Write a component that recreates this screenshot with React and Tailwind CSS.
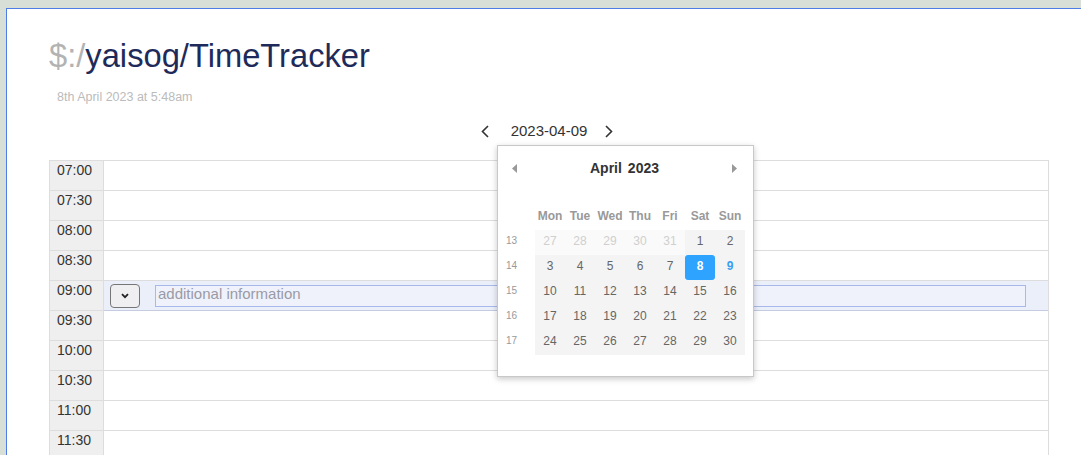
import React from "react";

const times = [];
for (let h = 7; h < 12; h++) {
  const hh = String(h).padStart(2, "0");
  times.push(hh + ":00", hh + ":30");
}

const weeks = [
  { n: 13, days: [[27, 1], [28, 1], [29, 1], [30, 1], [31, 1], [1], [2]] },
  { n: 14, days: [[3], [4], [5], [6], [7], [8, 0, "sel"], [9, 0, "today"]] },
  { n: 15, days: [[10], [11], [12], [13], [14], [15], [16]] },
  { n: 16, days: [[17], [18], [19], [20], [21], [22], [23]] },
  { n: 17, days: [[24], [25], [26], [27], [28], [29], [30]] },
];

const Chevron = ({ dir }) => (
  <svg width="8" height="13" viewBox="0 0 8 13" className="block">
    <path
      d={dir === "left" ? "M7 1 L1.5 6.5 L7 12" : "M1 1 L6.5 6.5 L1 12"}
      fill="none"
      stroke="#333"
      strokeWidth="1.6"
    />
  </svg>
);

const Calendar = () => (
  <div className="absolute left-[448px] top-[27px] w-[257px] bg-white border border-[#c8c8c8] shadow-[0_2px_6px_rgba(0,0,0,0.22)] pt-[7px] pb-[21px] z-10">
    <div className="flex items-center justify-between h-[30px] pl-[14px] pr-[16px]">
      <svg width="5" height="9" viewBox="0 0 5 9">
        <polygon points="5,0 0,4.5 5,9" fill="#999" />
      </svg>
      <div className="text-[14px] font-bold text-[#333] flex gap-[6px]">
        <span>April</span>
        <span>2023</span>
      </div>
      <svg width="5" height="9" viewBox="0 0 5 9">
        <polygon points="0,0 5,4.5 0,9" fill="#999" />
      </svg>
    </div>
    <div className="flex mt-[22px] h-[22px] items-center pl-[37px]">
      {["Mon", "Tue", "Wed", "Thu", "Fri", "Sat", "Sun"].map((d) => (
        <div key={d} className="w-[30px] text-center text-[12px] font-bold text-[#999]">
          {d}
        </div>
      ))}
    </div>
    <div className="mt-[3px]">
      {weeks.map((w) => (
        <div key={w.n} className="flex h-[25px]">
          <div className="w-[27px] mr-[10px] flex items-center justify-center pb-[5px] text-[10px] text-[#999]">
            {w.n}
          </div>
          {w.days.map(([d, out, kind]) => (
            <div
              key={d + "-" + (out ? "o" : "i")}
              className={
                "w-[30px] flex items-center justify-center pb-[4px] text-[12px] " +
                (out
                  ? "bg-[#fafafa] text-[#cfcfcf]"
                  : kind === "sel"
                  ? "bg-[#2ea3ff] text-white font-bold rounded-[3px]"
                  : kind === "today"
                  ? "bg-[#f4f4f4] text-[#3a9ff0] font-bold"
                  : "bg-[#f4f4f4] text-[#666]")
              }
            >
              {d}
            </div>
          ))}
        </div>
      ))}
    </div>
  </div>
);

export default function App() {
  return (
    <div className="h-[455px] overflow-hidden bg-[#d8dfd6] pt-[8px] pl-[6px] font-['Liberation_Sans',Arial,sans-serif]">
      <div className="h-full bg-white border-l border-t border-[#4f7de6] pl-[42px] pt-[28px]">
        <h1 className="text-[32.7px] leading-[38px] font-normal">
          <span className="text-[#b3b3b3]">$:/</span>
          <span className="text-[#1e2b5a]">yaisog/TimeTracker</span>
        </h1>
        <div className="mt-[15px] ml-[8px] text-[12.5px] leading-[14px] text-[#bbbbbb]">
          8th April 2023 at 5:48am
        </div>

        <div className="relative mt-[14px] w-[1000px]">
          <div className="flex items-center justify-center h-[26px] pr-[4px]">
            <Chevron dir="left" />
            <span className="ml-[22px] mr-[18px] text-[15px] text-[#333]">2023-04-09</span>
            <Chevron dir="right" />
          </div>
          <Calendar />

          <div className="mt-[16px] border-l border-t border-r border-[#dddddd]">
            {times.map((t) => {
              const hl = t === "09:00";
              return (
                <div key={t} className="flex h-[30px]">
                  <div className="w-[54px] shrink-0 bg-[#efefef] border-r border-b border-[#dddddd] pl-[7px] pt-[1px] text-[14px] leading-[16px] text-[#333]">
                    {t}
                  </div>
                  <div
                    className={
                      "flex-1 border-b flex items-center " +
                      (hl ? "bg-[#ebeffa] border-[#c5cbe0] pl-[6px] pr-[22px]" : "border-[#dddddd]")
                    }
                  >
                    {hl && (
                      <>
                        <button className="w-[30px] h-[24px] shrink-0 rounded-[4px] border border-[#767676] bg-[#efeff1] flex items-center justify-center">
                          <svg width="8" height="6" viewBox="0 0 8 6">
                            <path d="M1 1.2 L4 4.2 L7 1.2" fill="none" stroke="#222" strokeWidth="1.8" />
                          </svg>
                        </button>
                        <input
                          className="ml-[15px] flex-1 h-[22px] border border-[#a9b8ea] bg-[#eff2fb] px-[2px] pb-[2px] text-[15px] text-[#333] placeholder:text-[#9a9aa6] outline-none"
                          placeholder="additional information"
                        />
                      </>
                    )}
                  </div>
                </div>
              );
            })}
          </div>
        </div>
      </div>
    </div>
  );
}
